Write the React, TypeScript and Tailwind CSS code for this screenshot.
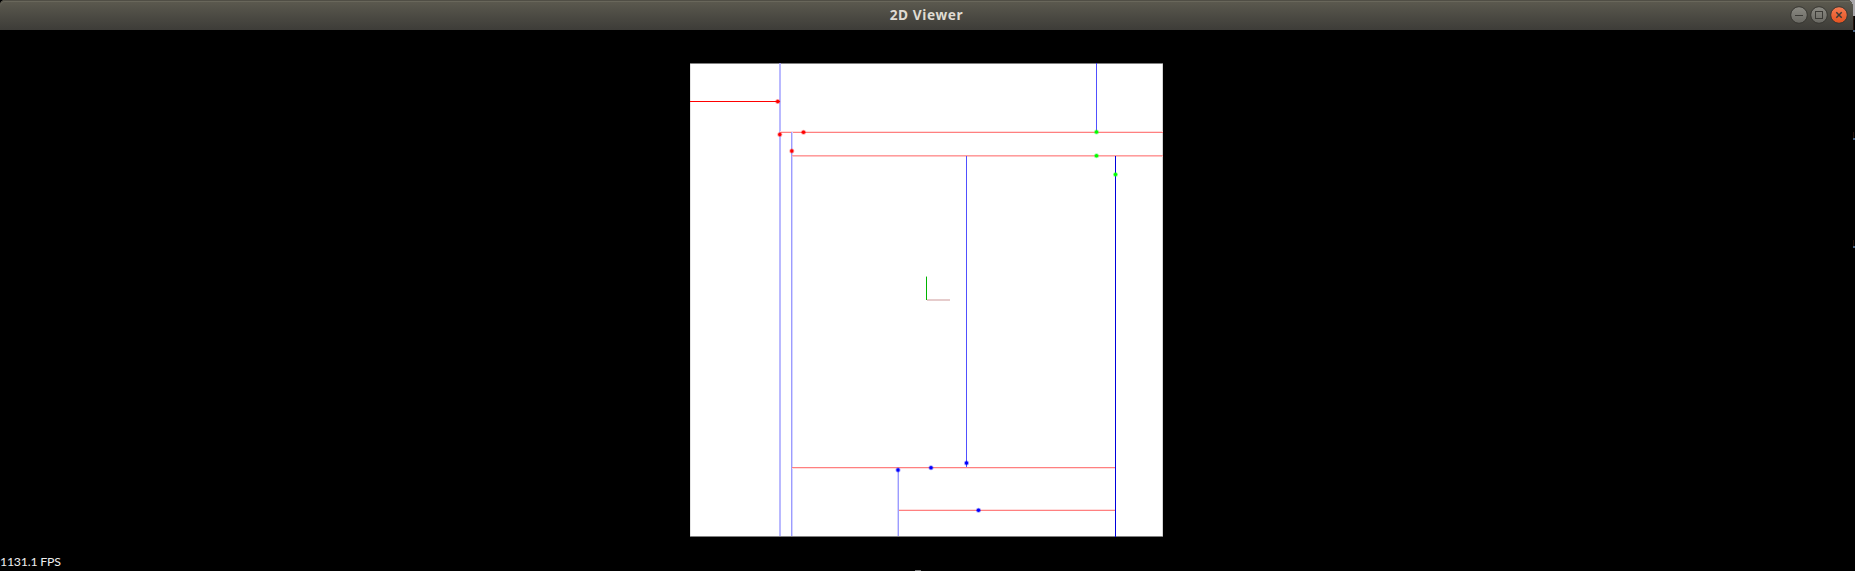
const dots: [number, number, string][] = [
  [777.7, 101.5, "#ff0000"],
  [779.8, 134.5, "#ff0000"],
  [803.5, 132.2, "#ff0000"],
  [791.8, 151, "#ff0000"],
  [1096.5, 132, "#00ff00"],
  [1096.5, 155.8, "#00ff00"],
  [1115.5, 174.5, "#00ff00"],
  [931, 467.8, "#0000ff"],
  [966.5, 463, "#0000ff"],
  [898, 470, "#0000ff"],
  [978.5, 510.2, "#0000ff"],
];

// x, y, width, height, colour
const strokes: [number, number, number, number, string][] = [
  [779, 63, 2, 474, "#b9b9ff"],
  [690, 101, 90, 1, "#ff0000"],
  [780, 131, 383, 1, "#ffdcdc"],
  [780, 132, 383, 1, "#ff8080"],
  [791, 132, 1, 405, "#9c9cff"],
  [792, 132, 1, 405, "#d4d4ff"],
  [792, 155, 371, 1, "#ff9c9c"],
  [792, 156, 371, 1, "#ffc4c4"],
  [1096, 63, 1, 69, "#5050ff"],
  [966, 156, 1, 312, "#5050ff"],
  [792, 467, 324, 1, "#ff8080"],
  [792, 468, 324, 1, "#ffdcdc"],
  [898, 509, 218, 1, "#ffdcdc"],
  [898, 510, 218, 1, "#ff8080"],
  [897, 468, 1, 69, "#d4d4ff"],
  [898, 468, 1, 69, "#9c9cff"],
  [1115, 156, 1, 381, "#0000dd"],
  [926, 276, 1, 1, "#90dd90"],
  [926, 277, 1, 23, "#00b400"],
  [927, 299, 23, 2, "#e6cccc"],
];

function Plot() {
  return (
    <svg className="block h-[474px] w-[473px]" viewBox="690 63 473 474">
      <rect x="690" y="63" width="473" height="474" fill="#fff" />
      <g shapeRendering="crispEdges">
        {strokes.map(([x, y, w, h, c], i) => (
          <rect key={i} x={x} y={y} width={w} height={h} fill={c} />
        ))}
        <rect x="690" y="63" width="473" height="1" fill="#808080" />
        <rect x="690" y="536" width="473" height="1" fill="#808080" />
        <rect x="690" y="64" width="1" height="37" fill="#e4e4e4" />
        <rect x="690" y="102" width="1" height="434" fill="#e4e4e4" />
        <rect x="1162" y="64" width="1" height="67" fill="#d4d4d4" />
        <rect x="1162" y="133" width="1" height="22" fill="#d4d4d4" />
        <rect x="1162" y="157" width="1" height="379" fill="#d4d4d4" />
        <rect x="779" y="63" width="2" height="1" fill="#9c9ce0" />
        <rect x="1096" y="63" width="1" height="1" fill="#3434e0" />
        <rect x="1115" y="536" width="1" height="1" fill="#0000dd" />
      </g>
      {dots.map(([x, y, c], i) => (
        <g key={i} fill={c}>
          <circle cx={x} cy={y} r="2.5" opacity="0.35" />
          <circle cx={x} cy={y} r="1.7" />
        </g>
      ))}
    </svg>
  );
}

function Controls() {
  return (
    <svg className="h-[30px] w-[62px]" viewBox="1789 0 62 30">
      <defs>
        <linearGradient id="grey" x1="0" y1="0" x2="0" y2="1">
          <stop offset="0" stopColor="#8b8a83" />
          <stop offset="1" stopColor="#696862" />
        </linearGradient>
        <linearGradient id="orange" x1="0" y1="0" x2="0" y2="1">
          <stop offset="0" stopColor="#f77c53" />
          <stop offset="1" stopColor="#e2511f" />
        </linearGradient>
      </defs>
      <g stroke="#373631">
        <circle cx="1799" cy="15" r="8.3" fill="url(#grey)" />
        <circle cx="1819" cy="15" r="8.3" fill="url(#grey)" />
        <circle cx="1839" cy="15" r="8.3" fill="url(#orange)" />
      </g>
      <g stroke="#3b3a36" fill="none">
        <path d="M1795 15.5h8" />
        <rect x="1815.5" y="11.5" width="7" height="7" />
        <path d="m1836.3 12.3 5.4 5.4m0-5.4-5.4 5.4" strokeWidth="1.5" />
      </g>
    </svg>
  );
}

export default function App() {
  return (
    <div className="relative flex h-[571px] w-[1855px] flex-col overflow-hidden bg-black">
      <header className="grid h-[30px] w-[1853px] shrink-0 grid-cols-[1fr_auto_1fr] items-center rounded-t-[5px] bg-linear-to-b from-[#5d5b50] to-[#3d3c38] shadow-[inset_0_1px_0_#504e45,inset_0_2px_0_#69675b]">
        <span />
        <h1 className="font-['Noto_Sans',sans-serif] text-[13.7px] leading-[30px] font-bold tracking-[0.6px] text-[#dfdbd2]">2D Viewer</h1>
        <div className="flex justify-end pr-[2px]">
          <Controls />
        </div>
      </header>
      <main className="flex h-[541px] flex-col justify-between">
        <div className="ml-[690px] pt-[33px]">
          <Plot />
        </div>
        <p className="h-[19px] font-['Lato',sans-serif] text-[12.3px] leading-[19px] tracking-[-0.2px] text-[#eee]">1131.1 FPS</p>
      </main>
      <svg className="absolute top-0 right-0 h-[571px] w-[6px]" viewBox="1849 0 6 571" shapeRendering="crispEdges">
        <path d="M1850 0h5v16h-2V5l-1-2-2-2z" fill="#a9a7aa" />
        <path d="M1853 16h1v14h-1zM1853 132h1v6h-1zM1853 240h1v6h-1z" fill="#26150f" />
        <path d="M1853 30h2v2h-2zM1853 138h2v2h-2zM1853 246h2v2h-2z" fill="#48617f" />
      </svg>
      <span className="absolute top-[570px] left-[915px] h-px w-[6px] bg-[#777]" />
    </div>
  );
}
